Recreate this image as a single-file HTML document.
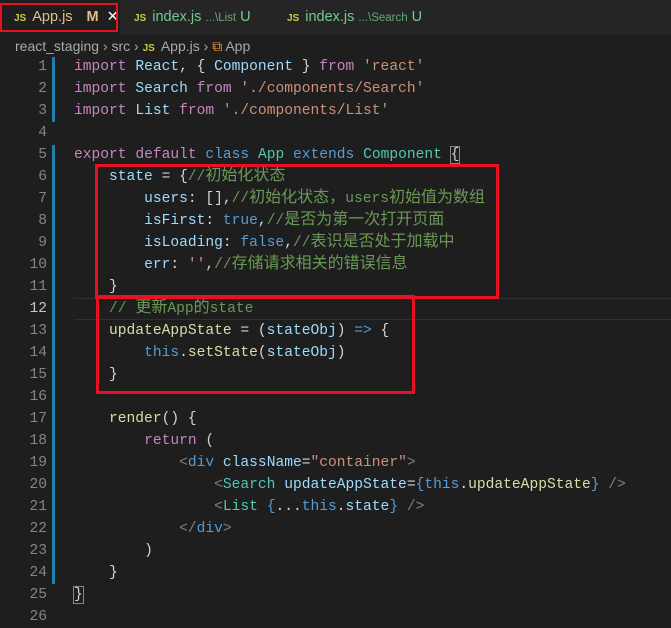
<!DOCTYPE html><html><head><meta charset="utf-8"><style>
body{margin:0;width:671px;height:617px;background:#1e1e1e;overflow:hidden;position:relative;font-family:"Liberation Sans","Noto Sans CJK SC",sans-serif}
.tabs{position:absolute;left:0;top:0;width:671px;height:35px;background:#252526}
.tab{position:absolute;top:0;height:35px;line-height:35px;font-size:14.5px;color:#73c991}
.js{color:#cbcb41;font-weight:bold;font-size:10px;margin-right:6px}
.bc{position:absolute;top:35px;left:15px;height:22px;line-height:22px;font-size:14px;color:#a9a9a9}
.code{position:absolute;left:0;top:56px;font-family:"Liberation Mono","Noto Sans CJK SC",monospace;font-size:14.6px}
.l{height:22px;line-height:22px;white-space:pre;position:relative;overflow:hidden}
.n{display:inline-block;width:47px;text-align:right;color:#858585;margin-right:27px}
.k{color:#c586c0}.v{color:#9cdcfe}.c{color:#4ec9b0}.s{color:#ce9178}.m{color:#6a9955}.b{color:#569cd6}.f{color:#dcdcaa}.t{color:#d4d4d4}.g{color:#808080}
.cn{font-family:"Noto Sans CJK SC",sans-serif;font-size:16px;line-height:0}
</style></head><body>
<div class="tabs">
<div class="tab" style="left:0;width:120px;background:#1e1e1e;color:#e2c08d;padding-left:14px;box-sizing:border-box"><span class="js">JS</span>App.js<span style="margin-left:14px;font-weight:bold">M</span><span style="margin-left:8px;color:#fff">✕</span></div>
<div class="tab" style="left:134px"><span class="js">JS</span>index.js <span style="font-size:11.5px;opacity:.8">...\List</span> U</div>
<div class="tab" style="left:287px"><span class="js">JS</span>index.js <span style="font-size:11.5px;opacity:.8">...\Search</span> U</div>
</div>
<div style="position:absolute;left:0;top:3px;width:118px;height:29px;border:2px solid #e81123;box-sizing:border-box"></div>
<div class="bc">react_staging › src › <span class="js">JS</span>App.js › <span style="color:#ee9d28">⧉</span> App</div>
<div style="position:absolute;left:52px;top:57px;width:3px;height:65px;background:#1b81a8"></div>
<div style="position:absolute;left:52px;top:145px;width:3px;height:439px;background:#1b81a8"></div>
<div style="position:absolute;left:74px;top:298px;width:597px;height:20px;border-top:1px solid #303030;border-bottom:1px solid #303030"></div>
<div class="code">
<div class="l"><span class="n">1</span><span class="k">import</span> <span class="v">React</span><span class="t">, { </span><span class="v">Component</span><span class="t"> } </span><span class="k">from</span> <span class="s">'react'</span></div>
<div class="l"><span class="n">2</span><span class="k">import</span> <span class="v">Search</span> <span class="k">from</span> <span class="s">'./components/Search'</span></div>
<div class="l"><span class="n">3</span><span class="k">import</span> <span class="v">List</span> <span class="k">from</span> <span class="s">'./components/List'</span></div>
<div class="l"><span class="n">4</span></div>
<div class="l"><span class="n">5</span><span class="k">export</span> <span class="k">default</span> <span class="b">class</span> <span class="c">App</span> <span class="b">extends</span> <span class="c">Component</span> <span class="t" style="outline:1px solid #888">{</span></div>
<div class="l"><span class="n">6</span>    <span class="v">state</span><span class="t"> = {</span><span class="m">//<span class="cn">初始化状态</span></span></div>
<div class="l"><span class="n">7</span>        <span class="v">users</span><span class="t">: [],</span><span class="m">//<span class="cn">初始化状态，</span>users<span class="cn">初始值为数组</span></span></div>
<div class="l"><span class="n">8</span>        <span class="v">isFirst</span><span class="t">: </span><span class="b">true</span><span class="t">,</span><span class="m">//<span class="cn">是否为第一次打开页面</span></span></div>
<div class="l"><span class="n">9</span>        <span class="v">isLoading</span><span class="t">: </span><span class="b">false</span><span class="t">,</span><span class="m">//<span class="cn">表识是否处于加载中</span></span></div>
<div class="l"><span class="n">10</span>        <span class="v">err</span><span class="t">: </span><span class="s">''</span><span class="t">,</span><span class="m">//<span class="cn">存储请求相关的错误信息</span></span></div>
<div class="l"><span class="n">11</span>    <span class="t">}</span></div>
<div class="l"><span class="n" style="color:#c6c6c6">12</span>    <span class="m">// <span class="cn">更新</span>App<span class="cn">的</span>state</span></div>
<div class="l"><span class="n">13</span>    <span class="f">updateAppState</span><span class="t"> = (</span><span class="v">stateObj</span><span class="t">) </span><span class="b">=&gt;</span><span class="t"> {</span></div>
<div class="l"><span class="n">14</span>        <span class="b">this</span><span class="t">.</span><span class="f">setState</span><span class="t">(</span><span class="v">stateObj</span><span class="t">)</span></div>
<div class="l"><span class="n">15</span>    <span class="t">}</span></div>
<div class="l"><span class="n">16</span></div>
<div class="l"><span class="n">17</span>    <span class="f">render</span><span class="t">() {</span></div>
<div class="l"><span class="n">18</span>        <span class="k">return</span><span class="t"> (</span></div>
<div class="l"><span class="n">19</span>            <span class="g">&lt;</span><span class="b">div</span> <span class="v">className</span><span class="t">=</span><span class="s">"container"</span><span class="g">&gt;</span></div>
<div class="l"><span class="n">20</span>                <span class="g">&lt;</span><span class="c">Search</span> <span class="v">updateAppState</span><span class="t">=</span><span class="b">{this</span><span class="t">.</span><span class="f">updateAppState</span><span class="b">}</span> <span class="g">/&gt;</span></div>
<div class="l"><span class="n">21</span>                <span class="g">&lt;</span><span class="c">List</span> <span class="b">{</span><span class="t">...</span><span class="b">this</span><span class="t">.</span><span class="v">state</span><span class="b">}</span> <span class="g">/&gt;</span></div>
<div class="l"><span class="n">22</span>            <span class="g">&lt;/</span><span class="b">div</span><span class="g">&gt;</span></div>
<div class="l"><span class="n">23</span>        <span class="t">)</span></div>
<div class="l"><span class="n">24</span>    <span class="t">}</span></div>
<div class="l"><span class="n">25</span><span class="t" style="outline:1px solid #888">}</span></div>
<div class="l"><span class="n">26</span></div>
</div>
<div style="position:absolute;left:95px;top:164px;width:404px;height:135px;border:3px solid #e81123;box-sizing:border-box"></div>
<div style="position:absolute;left:96px;top:295px;width:319px;height:99px;border:3px solid #e81123;box-sizing:border-box"></div>
</body></html>
